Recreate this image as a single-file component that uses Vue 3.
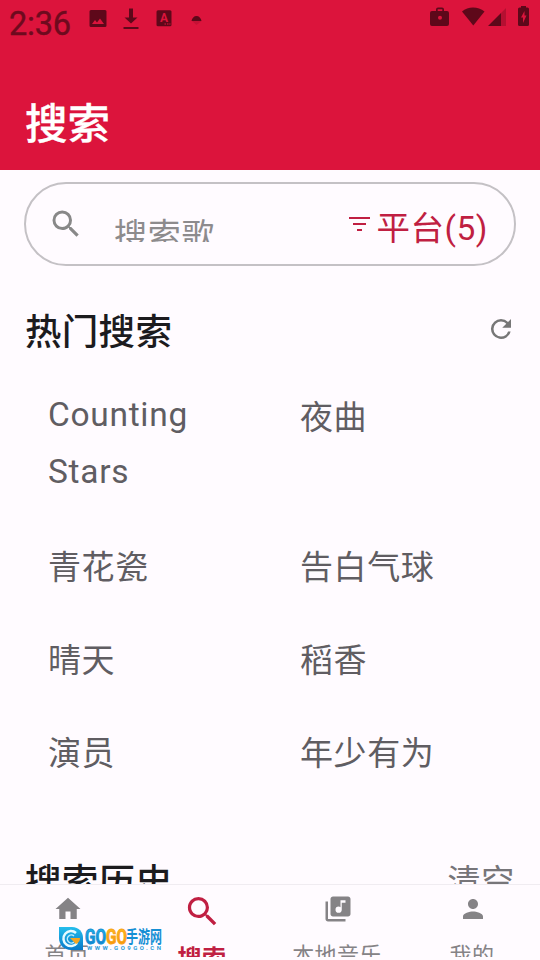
<script setup>
const songs = ['Counting Stars', '夜曲', '青花瓷', '告白气球', '晴天', '稻香', '演员', '年少有为']
const isLatin = (text) => /^[\x20-\x7e]+$/.test(text)
const tabs = [
  { label: '首页', icon: 'M10 20v-6h4v6h5v-8h3L12 3 2 12h3v8z' },
  { label: '搜索', active: true, icon: 'M15.5 14h-.79l-.28-.27A6.471 6.471 0 0 0 16 9.5 6.5 6.5 0 1 0 9.5 16c1.61 0 3.09-.59 4.23-1.57l.27.28v.79l5 4.99L20.49 19l-4.99-5zm-6 0C7.01 14 5 11.99 5 9.5S7.01 5 9.5 5 14 7.01 14 9.5 11.99 14 9.5 14z' },
  { label: '本地音乐', icon: 'M20 2H8c-1.1 0-2 .9-2 2v12c0 1.1.9 2 2 2h12c1.1 0 2-.9 2-2V4c0-1.1-.9-2-2-2zm-2 5h-3v5.5a2.5 2.5 0 1 1-2.5-2.5c.57 0 1.08.19 1.5.51V5h4v2zM4 6H2v14c0 1.1.9 2 2 2h14v-2H4V6z' },
  { label: '我的', icon: 'M12 12c2.21 0 4-1.79 4-4s-1.79-4-4-4-4 1.79-4 4 1.79 4 4 4zm0 2c-2.67 0-8 1.34-8 4v2h16v-2c0-2.66-5.33-4-8-4z' },
]
</script>

<template>
  <div class="screen">
    <header class="top">
      <div class="status">
        <span class="clock">2:36</span>
        <svg class="status-left" width="112" height="24" viewBox="0 0 112 24">
          <path fill-rule="evenodd" d="M2 2h14q1.500 0 1.500 1.500v14q0 1.500-1.500 1.500h-14q-1.500 0-1.500-1.500v-14q0-1.500 1.500-1.500zM3 16h12l-4-5.500-3 4-2-2.500z" />
          <path d="M40 .5h4v9h4.500l-6.500 6-6.500-6h4.500zM34.500 19h15v2h-15z" />
          <rect x="67.500" y="2.300" width="15" height="16" rx="1.500" />
          <text x="75" y="14" text-anchor="middle" class="badge-letter">A</text>
          <path class="dots" d="M75.500 15.500h1.500v1h-1.500zM78 15.500h1.500v1h-1.500zM80.300 15.500h1.200v1h-1.200z" />
          <path d="M102.500 13c.5-3 2.500-5 5-5s4.500 2 5 5z" />
          <path opacity=".18" d="M103 13h9.500l-5 4z" />
        </svg>
        <svg class="status-right" width="102" height="22" viewBox="0 0 102 22">
          <path fill-rule="evenodd" d="M3 4h4V2.500q0-2 2-2h4q2 0 2 2v1.500h3q2 0 2 2v11q0 2-2 2h-15q-2 0-2-2v-11q0-2 2-2zM8.700 4h4.600v-1.700h-4.600zM11 8.700a2 2 0 1 0 0 4 2 2 0 0 0 0-4z" />
          <path d="M33 4.500c6-5.500 16-5.500 22.500 0l-11.200 14z" />
          <path d="M59 19l13-13v13z" />
          <path opacity=".3" d="M72 6l5-5v18h-5z" />
          <path fill-rule="evenodd" d="M92 -1h5v1.500h1.500q1.500 0 1.500 1.500v15.500q0 1.500-1.500 1.500h-8q-1.500 0-1.500-1.500v-15.500q0-1.500 1.500-1.500h1.500zM95.500 4l-3.500 6.500h2v5.500l3.500-7.500h-2z" />
        </svg>
      </div>
      <h1>搜索</h1>
    </header>

    <main class="content">
      <div class="search-box">
        <svg class="search-icon" width="36" height="36" viewBox="0 0 24 24"><path :d="tabs[1].icon" /></svg>
        <div class="placeholder">搜索歌</div>
        <button class="filter">
          <svg width="22" height="16" viewBox="0 0 22 16"><path d="M0 0h21v2h-21zM4 6h13v2h-13zM8 12h5v2h-5z" /></svg>
          <span>平台(5)</span>
        </button>
      </div>

      <div class="section">
        <h2>热门搜索</h2>
        <svg class="refresh" width="30" height="30" viewBox="0 0 24 24"><path d="M17.650 6.350A7.958 7.958 0 0 0 12 4a8 8 0 1 0 7.730 10h-2.080A5.990 5.990 0 0 1 12 18a6 6 0 1 1 0-12c1.660 0 3.140.69 4.220 1.780L13 11h7V4z" /></svg>
      </div>

      <ul class="songs">
        <li v-for="song in songs" :key="song" :class="{ latin: isLatin(song) }">{{ song }}</li>
      </ul>

      <div class="section history">
        <h2>搜索历史</h2>
        <span class="clear">清空</span>
      </div>
    </main>

    <nav class="tabs">
      <div v-for="tab in tabs" :key="tab.label" class="tab" :class="{ active: tab.active }">
        <svg class="tab-icon" viewBox="0 0 24 24"><path :d="tab.icon" /></svg>
        <span class="tab-label">{{ tab.label }}</span>
      </div>
    </nav>

    <svg class="watermark" width="108" height="28" viewBox="0 0 108 28">
      <defs>
        <linearGradient id="blue" x1="0" y1="0" x2="0" y2="1"><stop offset="0" stop-color="#25bdec" /><stop offset="1" stop-color="#0879c9" /></linearGradient>
        <linearGradient id="gold" x1="0" y1="0" x2="0" y2="1"><stop offset="0" stop-color="#ffc326" /><stop offset="1" stop-color="#f58a08" /></linearGradient>
      </defs>
      <path d="M1 1h13c7 0 11 5 11 11v12h-12c-7 0-12-5-12-12z" fill="url(#blue)" />
      <path d="M18 7a7.500 7.500 0 1 0 1 10" fill="none" stroke="#e8fbff" stroke-width="2.500" />
      <path d="M16 10a4 4 0 1 0 0 6" fill="none" stroke="#bcecff" stroke-width="1.500" />
      <path d="M12 12h10q0 4-4 6z" fill="#f5a623" />
      <text x="27" y="17.500" class="brand" textLength="21" lengthAdjust="spacingAndGlyphs" fill="url(#blue)" stroke="#168fd4">GO</text>
      <text x="48" y="17.500" class="brand" textLength="21" lengthAdjust="spacingAndGlyphs" fill="url(#gold)" stroke="#f9a413">GO</text>
      <text x="68" y="17" class="brand-cn" textLength="36" lengthAdjust="spacingAndGlyphs">手游网</text>
      <text x="29" y="24" class="brand-url" textLength="74">WWW.GO9GO.CN</text>
    </svg>
  </div>
</template>

<style>
body { margin: 0; background: #fffbff; }
</style>

<style scoped>
.screen { position: relative; width: 540px; height: 960px; overflow: hidden; display: flex; flex-direction: column; background: #fffbff; font-family: Roboto, "Noto Sans CJK SC", sans-serif; }
.top { flex: none; height: 170px; box-sizing: border-box; background: #dc143c; }
.status { display: flex; height: 46px; padding: 0 9px; align-items: flex-start; fill: #5e081a; }
.clock { width: 80px; font-size: 32.5px; line-height: 48px; color: #6e0a1e; letter-spacing: -.2px; -webkit-text-stroke: .4px #6e0a1e; }
.status-left { margin-top: 8px; overflow: visible; }
.status-right { margin: 7px 0 0 auto; overflow: visible; }
.badge-letter { font: 700 12px Roboto, sans-serif; fill: #dc143c; }
.dots { fill: #dc143c; }
h1 { margin: 48px 0 0; padding-left: 25px; font-size: 42.500px; line-height: 62px; height: 62px; font-weight: 500; color: #fff; -webkit-text-stroke: .3px #fff; }
.content { flex: 1; min-height: 0; overflow: hidden; padding: 12px 24px 0; }
.search-box { display: flex; height: 84px; box-sizing: border-box; border: 2px solid #c4c1c5; border-radius: 42px; padding: 0 26px 0 22px; }
.search-icon { flex: none; margin-top: 22px; fill: #888; }
.placeholder { height: 24px; margin: 34px 0 0 30px; font-size: 33px; line-height: 36px; letter-spacing: .7px; color: #8d8b8d; overflow: hidden; }
.filter { display: flex; margin: 0 0 0 auto; padding: 0; border: 0; background: none; color: #c01f42; font: 33.500px/90px Roboto, "Noto Sans CJK SC", sans-serif; letter-spacing: .5px; }
.filter svg { margin: 33px 6px 0 0; fill: #c01f42; }
.section { display: flex; justify-content: space-between; align-items: center; height: 54px; margin-top: 37px; }
h2 { margin: 0; padding: 5px 0 0 1px; font-size: 36.500px; line-height: 54px; font-weight: 500; letter-spacing: .3px; color: #1c1b1e; }
.refresh { fill: #777; margin-bottom: 2px; }
.songs { list-style: none; margin: 11px 0 0; padding: 0; display: grid; grid-template-columns: 252px 240px; }
.songs li { padding: 21px 24px 15px; font-size: 33px; line-height: 57px; letter-spacing: .6px; color: #605d62; }
.songs .latin { padding: 18px 24px; font-size: 33.500px; letter-spacing: .7px; }
.history { margin-top: 56px; }
.clear { padding-top: 4px; font-size: 33px; line-height: 54px; letter-spacing: .7px; margin-right: 1px; color: #777579; }
.tabs { flex: none; display: flex; height: 76px; box-sizing: border-box; border-top: 1px solid #f0ecf1; background: #fffbff; }
.tab { flex: 1; height: 72px; overflow: hidden; display: flex; flex-direction: column; align-items: center; color: #858386; fill: #858386; }
.tab-icon { flex: none; width: 30px; height: 30px; margin-top: 9px; }
.tab-label { margin: 16px 1px 0 0; font-size: 22px; line-height: 32px; letter-spacing: .4px; white-space: nowrap; }
.active { color: #c01f42; fill: #c01f42; }
.active .tab-icon { width: 39px; height: 39px; margin-top: 7px; }
.active .tab-label { margin-top: 12px; font-size: 24px; font-weight: 700; }
.watermark { position: absolute; left: 58px; top: 926px; }
.brand { font: 700 20px Roboto, sans-serif; stroke-width: .9; }
.brand-cn { font: 700 17px "Noto Sans CJK SC", sans-serif; fill: #168fd4; }
.brand-url { font: 700 6px Roboto, sans-serif; fill: #2a9bd8; }
</style>
